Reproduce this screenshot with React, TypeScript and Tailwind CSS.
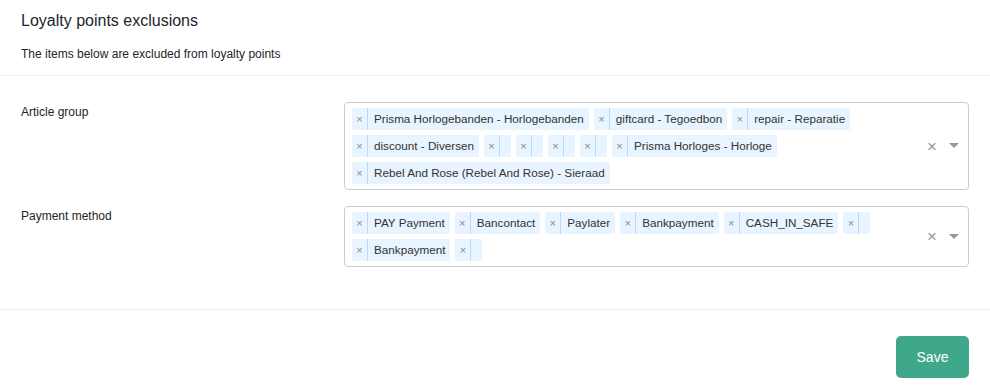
import React from 'react';

const TIMES = '\u00d7';

const articleGroups = [
  'Prisma Horlogebanden - Horlogebanden',
  'giftcard - Tegoedbon',
  'repair - Reparatie',
  'discount - Diversen',
  '',
  '',
  '',
  '',
  'Prisma Horloges - Horloge',
  'Rebel And Rose (Rebel And Rose) - Sieraad',
];

const paymentMethods = [
  'PAY Payment',
  'Bancontact',
  'Paylater',
  'Bankpayment',
  'CASH_IN_SAFE',
  '',
  'Bankpayment',
  '',
];

const Chip: React.FC<{ label: string }> = ({ label }) => (
  <div className="flex items-stretch h-[22px] mr-[5px] mb-[5px] bg-[#e8f4ff] rounded-[2px] text-[11.7px] text-[#333]">
    <span className="w-4 flex items-center justify-center text-[11px] text-[#8a8a8a] border-r border-[#b8d9fb]">{TIMES}</span>
    <span className="flex items-center pl-[6px] pr-[5px] min-w-[10px]">{label}</span>
  </div>
);

const MultiSelect: React.FC<{ items: string[] }> = ({ items }) => (
  <div className="flex-1 flex border border-[#ccc] rounded bg-white">
    <div className="flex-1 flex flex-wrap content-start pt-[5px] pl-[7px] pr-[40px]">
      {items.map((item, i) => (
        <Chip key={i} label={item} />
      ))}
    </div>
    <div className="flex items-center pr-[9px] gap-[12px] text-[#999]">
      <span className="text-[17px] leading-none">{TIMES}</span>
      <svg width="10" height="6" viewBox="0 0 10 6">
        <path d="M0 0 L10 0 L5 5 Z" fill="#999" />
      </svg>
    </div>
  </div>
);

export default function App() {
  return (
    <div className="w-[990px] h-[392px] bg-white" style={{ fontFamily: '"Liberation Sans", Arial, sans-serif' }}>
      <div className="px-[21px] pt-[11px] pb-[13px] border-b border-[#eee]">
        <h1 className="text-[16px] leading-[20px] text-[#212529]">Loyalty points exclusions</h1>
        <p className="mt-[15px] text-[12px] leading-[16px] text-[#212529]">The items below are excluded from loyalty points</p>
      </div>

      <div className="px-[21px] pt-[26px] pb-[42px] border-b border-[#eee] flex flex-col gap-[16px]">
        <div className="flex">
          <label className="w-[323px] pt-[2px] text-[12px] leading-[16px] text-[#212529]">Article group</label>
          <MultiSelect items={articleGroups} />
        </div>
        <div className="flex">
          <label className="w-[323px] pt-[2px] text-[12px] leading-[16px] text-[#212529]">Payment method</label>
          <MultiSelect items={paymentMethods} />
        </div>
      </div>

      <div className="flex justify-end px-[21px] pt-[26px]">
        <button className="w-[73px] h-[42px] rounded-[5px] bg-[#3fa88a] text-white text-[14px]">Save</button>
      </div>
    </div>
  );
}
